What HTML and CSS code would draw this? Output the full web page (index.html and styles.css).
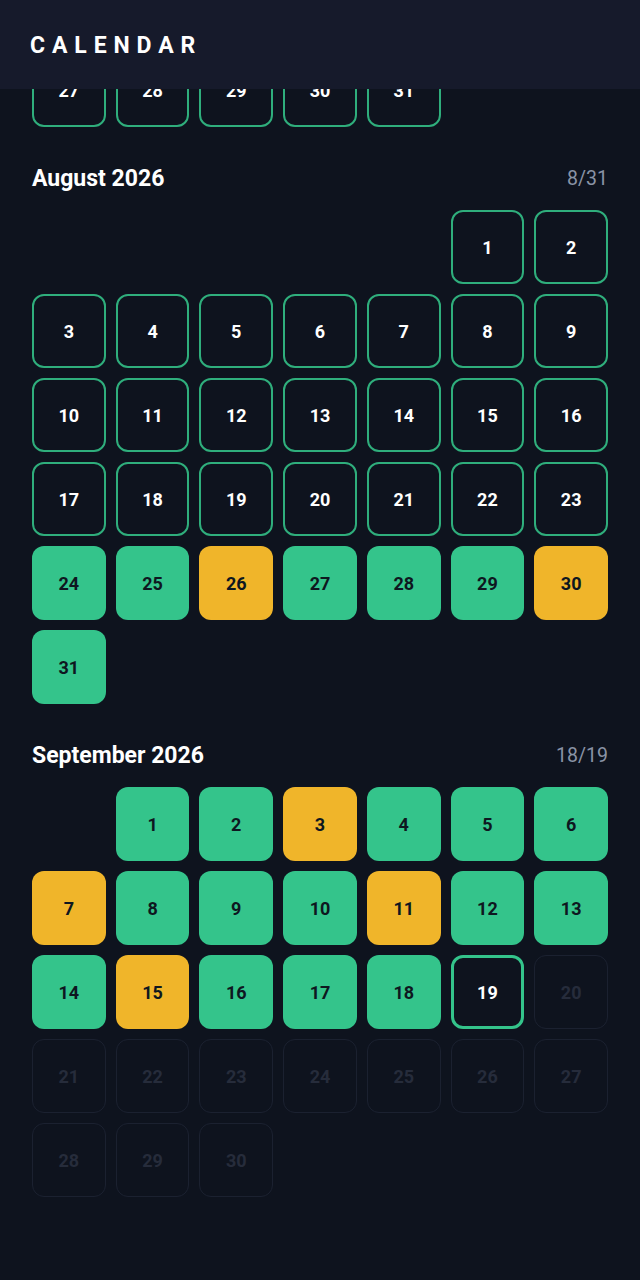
FILE: index.html
```html
<!DOCTYPE html>
<html>
<head>
<meta charset="utf-8">
<link rel="stylesheet" href="styles.css">
</head>
<body>
<header class="topbar"><h1 class="brand">CALENDAR</h1></header>
<main class="content">
  <section class="month month-partial">
    <div class="grid">
      <div class="day out">27</div><div class="day out">28</div><div class="day out">29</div><div class="day out">30</div><div class="day out">31</div>
    </div>
  </section>

  <section class="month">
    <div class="month-head"><h2 class="month-title">August 2026</h2><span class="count">8/31</span></div>
    <div class="grid">
      <div class="day empty"></div><div class="day empty"></div><div class="day empty"></div><div class="day empty"></div><div class="day empty"></div>
      <div class="day out">1</div><div class="day out">2</div>
      <div class="day out">3</div><div class="day out">4</div><div class="day out">5</div><div class="day out">6</div><div class="day out">7</div><div class="day out">8</div><div class="day out">9</div>
      <div class="day out">10</div><div class="day out">11</div><div class="day out">12</div><div class="day out">13</div><div class="day out">14</div><div class="day out">15</div><div class="day out">16</div>
      <div class="day out">17</div><div class="day out">18</div><div class="day out">19</div><div class="day out">20</div><div class="day out">21</div><div class="day out">22</div><div class="day out">23</div>
      <div class="day done">24</div><div class="day done">25</div><div class="day part">26</div><div class="day done">27</div><div class="day done">28</div><div class="day done">29</div><div class="day part">30</div>
      <div class="day done">31</div>
    </div>
  </section>

  <section class="month">
    <div class="month-head"><h2 class="month-title">September 2026</h2><span class="count">18/19</span></div>
    <div class="grid">
      <div class="day empty"></div>
      <div class="day done">1</div><div class="day done">2</div><div class="day part">3</div><div class="day done">4</div><div class="day done">5</div><div class="day done">6</div>
      <div class="day part">7</div><div class="day done">8</div><div class="day done">9</div><div class="day done">10</div><div class="day part">11</div><div class="day done">12</div><div class="day done">13</div>
      <div class="day done">14</div><div class="day part">15</div><div class="day done">16</div><div class="day done">17</div><div class="day done">18</div><div class="day today">19</div><div class="day future">20</div>
      <div class="day future">21</div><div class="day future">22</div><div class="day future">23</div><div class="day future">24</div><div class="day future">25</div><div class="day future">26</div><div class="day future">27</div>
      <div class="day future">28</div><div class="day future">29</div><div class="day future">30</div>
    </div>
  </section>
</main>
</body>
</html>
```
FILE: styles.css
```css
* { box-sizing: border-box; }
html, body { margin: 0; padding: 0; }
body {
  background: #0e131e;
  font-family: Roboto, "Liberation Sans", sans-serif;
  color: #ffffff;
  width: 640px;
  height: 1280px;
  overflow: hidden;
}
.topbar {
  position: fixed;
  top: 0;
  left: 0;
  width: 640px;
  height: 89px;
  background: #161a2b;
  display: flex;
  align-items: center;
  padding: 1px 30px 0;
  z-index: 10;
}
.brand {
  margin: 0;
  font-size: 23px;
  font-weight: 700;
  letter-spacing: 0.3em;
  color: #ffffff;
  line-height: 1;
}
.content {
  padding: 0 32px;
}
.month-partial { padding-top: 53px; }
.month { display: flex; flex-direction: column; }
.month-head {
  display: flex;
  justify-content: space-between;
  align-items: center;
  height: 28px;
  margin-top: 38px;
  margin-bottom: 17px;
}
.month-title {
  margin: 0;
  font-size: 23px;
  font-weight: 700;
  line-height: 28px;
}
.count {
  font-size: 19.5px;
  color: #8a93a6;
  line-height: 28px;
}
.grid {
  display: grid;
  grid-template-columns: repeat(7, 1fr);
  grid-auto-rows: 74px;
  gap: 10px;
}
.day {
  border-radius: 12px;
  display: flex;
  align-items: center;
  justify-content: center;
  font-size: 18px;
  font-weight: 700;
}
.day.empty { visibility: hidden; }
.day.out {
  border: 2px solid #2fae7c;
  color: #ffffff;
}
.day.done {
  background: #34c48b;
  color: #0e1720;
}
.day.part {
  background: #f0b52a;
  color: #0e1720;
}
.day.today {
  border: 3px solid #34c48b;
  color: #ffffff;
}
.day.future {
  border: 1px solid #1b2130;
  color: #262c3b;
}
```
